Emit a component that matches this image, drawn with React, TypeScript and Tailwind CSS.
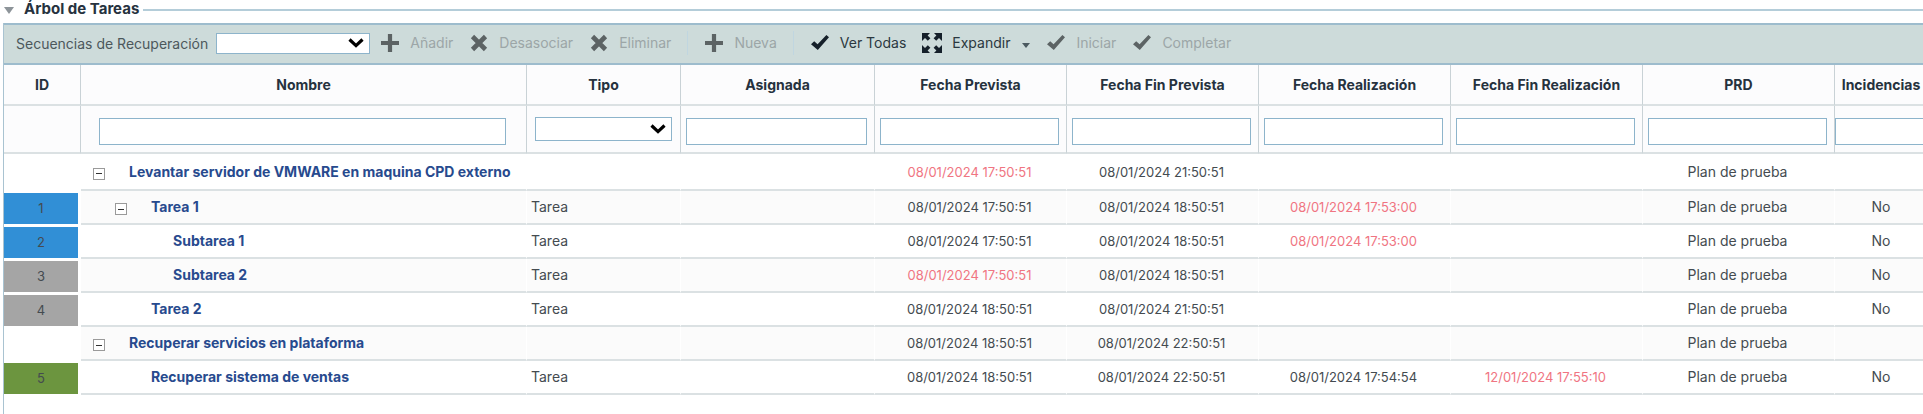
import { ReactNode } from 'react';
import { clsx } from 'clsx';

interface Task {
  id?: number;
  status?: 'started' | 'pending' | 'done';
  name: string;
  level: number;
  expandable?: boolean;
  type?: string;
  planned: string;
  plannedLate?: boolean;
  plannedEnd: string;
  actual?: string;
  actualLate?: boolean;
  finished?: string;
  finishedLate?: boolean;
  prd: string;
  incidents?: string;
}

const tasks: Task[] = [
  { name: 'Levantar servidor de VMWARE en maquina CPD externo', level: 0, expandable: true, planned: '08/01/2024 17:50:51', plannedLate: true, plannedEnd: '08/01/2024 21:50:51', prd: 'Plan de prueba' },
  { id: 1, status: 'started', name: 'Tarea 1', level: 1, expandable: true, type: 'Tarea', planned: '08/01/2024 17:50:51', plannedEnd: '08/01/2024 18:50:51', actual: '08/01/2024 17:53:00', actualLate: true, prd: 'Plan de prueba', incidents: 'No' },
  { id: 2, status: 'started', name: 'Subtarea 1', level: 2, type: 'Tarea', planned: '08/01/2024 17:50:51', plannedEnd: '08/01/2024 18:50:51', actual: '08/01/2024 17:53:00', actualLate: true, prd: 'Plan de prueba', incidents: 'No' },
  { id: 3, status: 'pending', name: 'Subtarea 2', level: 2, type: 'Tarea', planned: '08/01/2024 17:50:51', plannedLate: true, plannedEnd: '08/01/2024 18:50:51', prd: 'Plan de prueba', incidents: 'No' },
  { id: 4, status: 'pending', name: 'Tarea 2', level: 1, type: 'Tarea', planned: '08/01/2024 18:50:51', plannedEnd: '08/01/2024 21:50:51', prd: 'Plan de prueba', incidents: 'No' },
  { name: 'Recuperar servicios en plataforma', level: 0, expandable: true, planned: '08/01/2024 18:50:51', plannedEnd: '08/01/2024 22:50:51', prd: 'Plan de prueba' },
  { id: 5, status: 'done', name: 'Recuperar sistema de ventas', level: 1, type: 'Tarea', planned: '08/01/2024 18:50:51', plannedEnd: '08/01/2024 22:50:51', actual: '08/01/2024 17:54:54', finished: '12/01/2024 17:55:10', finishedLate: true, prd: 'Plan de prueba', incidents: 'No' },
];

const columns = [
  { label: 'ID', width: 'w-[77px]' },
  { label: 'Nombre', width: '' },
  { label: 'Tipo', width: 'w-[154px]' },
  { label: 'Asignada', width: 'w-[194px]' },
  { label: 'Fecha Prevista', width: 'w-48' },
  { label: 'Fecha Fin Prevista', width: 'w-48' },
  { label: 'Fecha Realización', width: 'w-48' },
  { label: 'Fecha Fin Realización', width: 'w-48' },
  { label: 'PRD', width: 'w-48' },
  { label: 'Incidencias', width: 'w-[93px]' },
];

const statusColor = {
  started: 'bg-[#318fd6]',
  pending: 'bg-[#a5a5a5]',
  done: 'bg-[#6c953f]',
};

const indent = ['pl-3', 'pl-[34px]', 'pl-14'];

const PlusIcon = () => (
  <svg width="20" height="20" viewBox="0 0 20 20" fill="currentColor">
    <path d="M7.9 1h4.2v6.9H19v4.2h-6.9V19H7.9v-6.9H1V7.9h6.9z" />
  </svg>
);

const CrossIcon = () => (
  <svg width="20" height="20" viewBox="0 0 20 20" stroke="currentColor" strokeWidth="4.6">
    <path d="M3.5 3.5l13 13M16.5 3.5l-13 13" />
  </svg>
);

const CheckIcon = () => (
  <svg width="20" height="20" viewBox="0 0 20 20" fill="currentColor">
    <path d="M1 11.2l3.2-2.9 3.4 2.9L16.4 2 19 4.2 7.8 17z" />
  </svg>
);

const ExpandIcon = () => (
  <svg width="20" height="20" viewBox="0 0 20 20" fill="currentColor">
    <path d="M0 0h8L5.6 2.4l2.8 2.8-2.6 2.6L3 5 0 8z" />
    <path d="M20 0v8l-3-3-2.8 2.8-2.6-2.6 2.8-2.8L12 0z" />
    <path d="M0 20v-8l3 3 2.8-2.8 2.6 2.6-2.8 2.8L8 20z" />
    <path d="M20 20h-8l2.4-2.4-2.8-2.8 2.6-2.6L17 15l3-3z" />
  </svg>
);

const ToolButton = ({ icon, disabled, menu, children }: { icon: ReactNode; disabled?: boolean; menu?: boolean; children: ReactNode }) => (
  <button
    type="button"
    disabled={disabled}
    className={clsx('flex items-center gap-2.5 whitespace-nowrap', disabled ? 'text-[#9ca6a7]' : 'text-[#2b3840]')}
  >
    <span className={disabled ? 'text-[#5c6364]' : 'text-[#15202a]'}>{icon}</span>
    {children}
    {menu && (
      <svg width="8" height="5" viewBox="0 0 8 5" className="mt-1 ml-0.5" fill="#4b5a60">
        <path d="M0 0h8L4 5z" />
      </svg>
    )}
  </button>
);

const Separator = () => <span className="h-6 w-px bg-[#c0d6e0]" />;

const Select = ({ label, id, className }: { label?: string; id?: string; className: string }) => (
  <span className={clsx('relative flex', className)}>
    <select id={id} aria-label={label} className="size-full appearance-none border border-[#8db4cb] bg-white">
      <option value="" />
    </select>
    <svg width="16" height="10" viewBox="0 0 16 10" className="pointer-events-none absolute inset-y-0 right-1.5 my-auto" fill="none" stroke="#000" strokeWidth="3.2">
      <path d="M1.5 1.5L8 7.6l6.5-6.1" />
    </svg>
  </span>
);

const cell = 'border-r border-b-2 border-r-white border-b-[#dbe1e3]';

const DateCell = ({ value, late }: { value?: string; late?: boolean }) => (
  <td className={clsx(cell, 'pr-0.5 text-center text-[13px]', late ? 'text-[#f07582]' : 'text-[#444b50]')}>{value}</td>
);

const TaskRow = ({ task, odd }: { task: Task; odd: boolean }) => (
  <tr className={clsx('h-[34px] first:h-[37px]', odd && 'bg-[#fbfbfb]')}>
    <td className="bg-white pr-[3px] text-center text-[#444b50]">
      {task.status && <div className={clsx('flex h-[31px] items-center justify-center text-[13px]', statusColor[task.status])}>{task.id}</div>}
    </td>
    <td className={clsx(cell, indent[task.level])}>
      <div className="flex items-center font-bold text-[#274a8e]">
        <span className="w-9 shrink-0">
          {task.expandable && (
            <button type="button" aria-label="Contraer" className="mt-1 flex size-3 items-center justify-center border border-[#9a9a9a] bg-white">
              <span className="h-px w-1.5 bg-[#333]" />
            </button>
          )}
        </span>
        <a href="#" className="whitespace-nowrap">{task.name}</a>
      </div>
    </td>
    <td className={clsx(cell, 'pl-1 text-[#444b50]')}>{task.type}</td>
    <td className={cell} />
    <DateCell value={task.planned} late={task.plannedLate} />
    <DateCell value={task.plannedEnd} />
    <DateCell value={task.actual} late={task.actualLate} />
    <DateCell value={task.finished} late={task.finishedLate} />
    <td className={clsx(cell, 'pr-0.5 text-center text-[#444b50]')}>{task.prd}</td>
    <td className={clsx(cell, 'text-center text-[#444b50]')}>{task.incidents}</td>
  </tr>
);

const Filter = ({ label }: { label: string }) => {
  if (label === 'ID') return null;
  if (label === 'Tipo') return <Select label="Tipo" className="mx-2 h-6" />;

  return (
    <input
      type="text"
      aria-label={label}
      className={clsx(
        'mt-1 block h-[27px] border border-[#8db4cb] bg-white px-1',
        label === 'Nombre' && 'mx-[18px] w-[calc(100%-38px)]',
        label === 'Incidencias' && 'w-full',
        label !== 'Nombre' && label !== 'Incidencias' && 'mx-[5px] w-[calc(100%-12px)]'
      )}
    />
  );
};

export default function App() {
  return (
    <main className="overflow-hidden bg-white font-[Inter,'Noto_Sans',sans-serif] text-sm leading-5">
      <div className="flex h-[23px] items-start gap-1 pl-1">
        <button type="button" aria-label="Contraer sección" className="mt-1.5 mr-1.5">
          <svg width="10" height="8" viewBox="0 0 10 8" fill="#8d9499">
            <path d="M0 1h10L5 8z" />
          </svg>
        </button>
        <h1 className="text-[15px] leading-[18px] font-bold text-[#26323e]">Árbol de Tareas</h1>
        <span className="mt-[9px] h-0.5 flex-1 bg-[#b4cdd9]" />
      </div>

      <section className="ml-[3px] min-h-[391px] border-l border-[#a9c3d1]">
        <div className="flex h-[42px] items-center border-t-2 border-b-2 border-[#9dbccd] bg-[#cddbda] pb-0.5 pl-3">
          <label htmlFor="sequence" className="pt-0.5 text-[#4c585c]">Secuencias de Recuperación</label>
          <Select id="sequence" className="ml-2 h-[21px] w-[154px]" />
          <div className="ml-2.5 flex items-center gap-4">
            <ToolButton icon={<PlusIcon />} disabled>Añadir</ToolButton>
            <ToolButton icon={<CrossIcon />} disabled>Desasociar</ToolButton>
            <ToolButton icon={<CrossIcon />} disabled>Eliminar</ToolButton>
            <Separator />
            <ToolButton icon={<PlusIcon />} disabled>Nueva</ToolButton>
            <Separator />
            <ToolButton icon={<CheckIcon />}>Ver Todas</ToolButton>
            <ToolButton icon={<ExpandIcon />} menu>Expandir</ToolButton>
            <ToolButton icon={<CheckIcon />} disabled>Iniciar</ToolButton>
            <ToolButton icon={<CheckIcon />} disabled>Completar</ToolButton>
          </div>
        </div>

        <table className="w-[calc(100%+5px)] table-fixed border-separate border-spacing-0">
          <thead className="bg-[#fcfcfd]">
            <tr className="h-[41px]">
              {columns.map((column) => (
                <th key={column.label} scope="col" className={clsx('border-r border-b-2 border-r-[#c9d2d6] border-b-[#dbe1e3] font-bold whitespace-nowrap text-[#26323e]', column.width)}>
                  {column.label}
                </th>
              ))}
            </tr>
            <tr className="h-12">
              {columns.map((column) => (
                <td key={column.label} className="border-r border-b-2 border-r-[#c9d2d6] border-b-[#dbe1e3]">
                  <Filter label={column.label} />
                </td>
              ))}
            </tr>
          </thead>
          <tbody>
            {tasks.map((task, index) => (
              <TaskRow key={task.name} task={task} odd={index % 2 === 1} />
            ))}
          </tbody>
        </table>
      </section>
    </main>
  );
}
